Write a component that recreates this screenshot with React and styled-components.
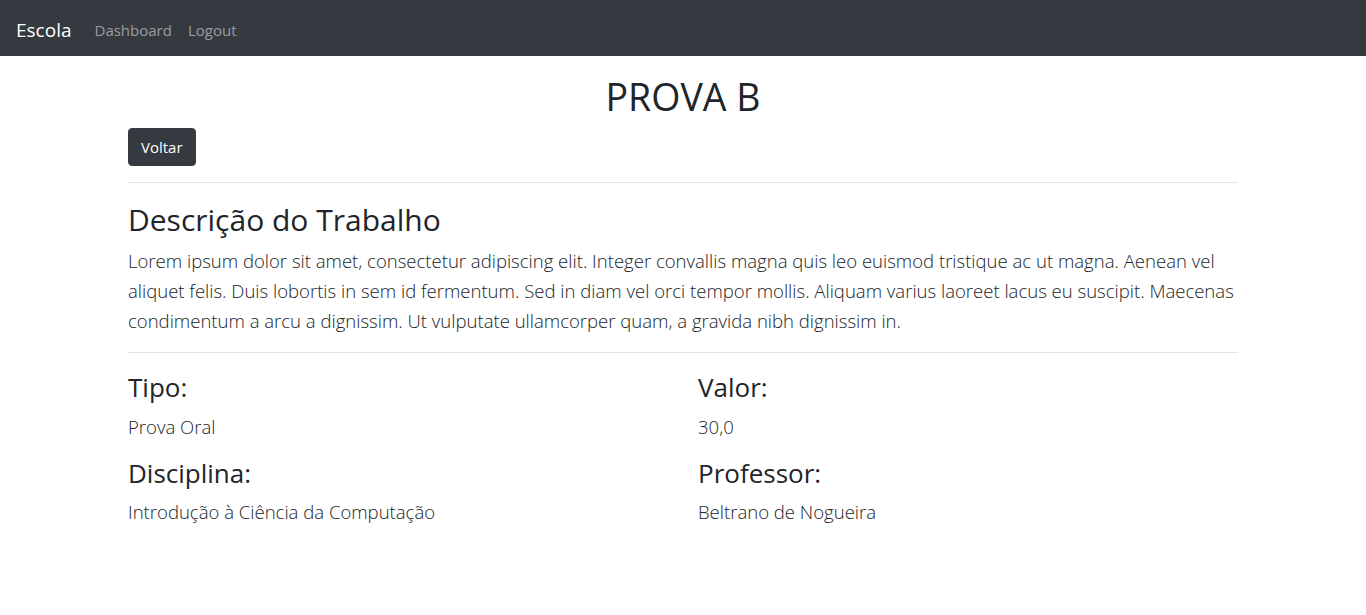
import styled, { createGlobalStyle } from "styled-components";

const GlobalStyle = createGlobalStyle`
    *, *::before, *::after {
        box-sizing: border-box;
    }
    body {
        margin: 0;
        font-family: "Open Sans", "Noto Sans", sans-serif;
        font-size: 16px;
        line-height: 1.5;
        color: #212529;
        background: #fff;
    }
`;

const Navbar = styled.nav`
    display: flex;
    align-items: center;
    height: 56px;
    padding: 10px 16px 6px;
    background-color: #343a40;
`;

const Brand = styled.a`
    color: #fff;
    font-size: 19px;
    line-height: 30px;
    margin-right: 15px;
    text-decoration: none;
`;

const NavLink = styled.a`
    color: rgba(255, 255, 255, 0.5);
    font-size: 15px;
    padding: 8px;
    text-decoration: none;
    cursor: pointer;
`;

const Container = styled.main`
    max-width: 1140px;
    margin: 17px auto 0;
    padding: 0 15px;
`;

const Title = styled.h1`
    margin: 0 0 7px;
    font-size: 37.5px;
    font-weight: 400;
    line-height: 48px;
    text-align: center;
`;

const BackButton = styled.button`
    display: block;
    height: 38px;
    padding: 6px 12px;
    border: 1px solid #343a40;
    border-radius: 4px;
    background-color: #343a40;
    color: #fff;
    font-family: inherit;
    font-size: 15px;
    line-height: 24px;
    cursor: pointer;
`;

const Divider = styled.hr`
    margin: 16px 0;
    border: 0;
    border-top: 1px solid rgba(0, 0, 0, 0.1);
`;

const SectionTitle = styled.h2`
    margin: 0 0 6px;
    padding-top: 2px;
    font-size: 30px;
    font-weight: 400;
    line-height: 38px;
`;

const Lead = styled.p`
    margin: 0 0 13px;
    padding-top: 1px;
    font-size: 18.55px;
    font-weight: 300;
    line-height: 30px;
`;

const Row = styled.div`
    display: grid;
    grid-template-columns: 1fr 1fr;
    column-gap: 30px;
`;

const Label = styled.h3`
    margin: 0 0 6px;
    padding-top: 2px;
    font-size: 26px;
    font-weight: 400;
    line-height: 33.6px;
`;

const Field = ({ label, value }) => (
    <div>
        <Label>{label}</Label>
        <Lead>{value}</Lead>
    </div>
);

const App = () => {
    return (
        <>
            <GlobalStyle />
            <Navbar>
                <Brand>Escola</Brand>
                <NavLink>Dashboard</NavLink>
                <NavLink>Logout</NavLink>
            </Navbar>
            <Container>
                <Title>PROVA B</Title>
                <BackButton>Voltar</BackButton>
                <Divider />
                <SectionTitle>Descrição do Trabalho</SectionTitle>
                <Lead>
                    Lorem ipsum dolor sit amet, consectetur adipiscing elit. Integer convallis magna quis leo euismod tristique ac ut magna. Aenean vel aliquet felis. Duis lobortis in sem id fermentum. Sed in diam vel orci tempor mollis. Aliquam varius laoreet lacus eu suscipit. Maecenas condimentum a arcu a dignissim. Ut vulputate ullamcorper quam, a gravida nibh dignissim in.
                </Lead>
                <Divider />
                <Row>
                    <Field label="Tipo:" value="Prova Oral" />
                    <Field label="Valor:" value="30,0" />
                    <Field label="Disciplina:" value="Introdução à Ciência da Computação" />
                    <Field label="Professor:" value="Beltrano de Nogueira" />
                </Row>
            </Container>
        </>
    );
};

export default App;
